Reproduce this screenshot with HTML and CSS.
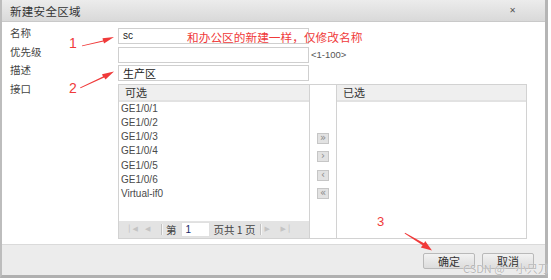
FILE: index.html
```html
<!DOCTYPE html>
<html lang="zh">
<head>
<meta charset="utf-8">
<link rel="stylesheet" href="styles.css">
</head>
<body>
<div class="dialog">
  <div class="hd">
    <span class="title">新建安全区域</span>
    <span class="close">&#x2715;</span>
  </div>
  <div class="bd">
    <div class="form">
      <div class="lbl">名称</div>
      <div class="field"><div class="input">sc</div></div>
      <div class="lbl">优先级</div>
      <div class="field"><div class="input"></div><span class="hint">&lt;1-100&gt;</span></div>
      <div class="lbl">描述</div>
      <div class="field"><div class="input cn">生产区</div></div>
      <div class="lbl">接口</div>
      <div class="transfer">
        <div class="panel left">
          <div class="phd">可选</div>
          <ul class="list">
            <li>GE1/0/1</li>
            <li>GE1/0/2</li>
            <li>GE1/0/3</li>
            <li>GE1/0/4</li>
            <li>GE1/0/5</li>
            <li>GE1/0/6</li>
            <li>Virtual-if0</li>
          </ul>
          <div class="pager">
            <span class="pi">&#x258F;&#x25C0;</span>
            <span class="pi">&#x25C0;</span>
            <span class="sep"></span>
            <span class="pt">第</span>
            <span class="pinput">1</span>
            <span class="pt">页共 1 页</span>
            <span class="sep"></span>
            <span class="pi">&#x25B6;</span>
            <span class="pi">&#x25B6;&#x2595;</span>
          </div>
        </div>
        <div class="mid">
          <span class="mb">&#xBB;</span>
          <span class="mb">&#x203A;</span>
          <span class="mb">&#x2039;</span>
          <span class="mb">&#xAB;</span>
        </div>
        <div class="panel right">
          <div class="phd">已选</div>
        </div>
      </div>
    </div>
  </div>
  <div class="ft">
    <span class="btn">确定</span>
    <span class="btn">取消</span>
  </div>
</div>

<div class="note n1">1</div>
<div class="note n2">2</div>
<div class="note n3">3</div>
<div class="note ntext">和办公区的新建一样，仅修改名称</div>
<svg class="arrows" width="551" height="280" viewBox="0 0 551 280">
  <g fill="#f03a3a">
    <polygon points="82,45.5 103,40.6 102.5,38.2 114,37 104,43.5 103.5,41.6 82,46.3"/>
    <polygon points="80,87.5 103,76.5 102,74.2 114,71.5 105.5,79.5 104.2,77.5 80.5,88.2"/>
    <polygon points="405,232.8 424,243.2 425.2,241 432,250.5 420.8,247.6 422.6,245.3 404.6,233.5"/>
  </g>
</svg>
<div class="wm">CSDN @一小只刀</div>
</body>
</html>
```

FILE: styles.css
```css
html, body {
  margin: 0;
  padding: 0;
  background: #ffffff;
}
body {
  width: 551px;
  height: 280px;
  overflow: hidden;
  position: relative;
  font-family: "Noto Sans CJK SC", "Liberation Sans", sans-serif;
  font-size: 11px;
  color: #333;
}
.dialog {
  width: 543px;
  height: 275px;
  border-left: 2px solid #bdbdbd;
  border-right: 3px solid #b5b5b5;
  border-bottom: 3px solid #b0b0b0;
  display: flex;
  flex-direction: column;
  background: #fff;
}
.hd {
  height: 21px;
  flex: none;
  background: linear-gradient(#ececec, #d9d9d9);
  border-bottom: 1px solid #c9c9c9;
  display: flex;
  align-items: center;
  justify-content: space-between;
  padding: 0 29px 0 8px;
}
.title {
  font-size: 11.5px;
  color: #333;
  letter-spacing: 0.3px;
}
.close {
  font-size: 8px;
  color: #555;
  font-weight: bold;
  font-family: "DejaVu Sans", sans-serif;
}
.bd {
  height: 222px;
  flex: none;
  padding: 6px 0 0 8px;
  box-sizing: border-box;
}
.form {
  display: grid;
  grid-template-columns: 108px 409px;
  row-gap: 2.5px;
}
.lbl {
  font-size: 10.5px;
  color: #444;
  line-height: 9px;
}
.field {
  display: flex;
  align-items: center;
  height: 16px;
}
.input {
  width: 191px;
  height: 16px;
  box-sizing: border-box;
  border: 1px solid #cfcfcf;
  font-family: "Liberation Sans", "Noto Sans CJK SC", sans-serif;
  font-size: 10px;
  line-height: 14px;
  padding-left: 4px;
  color: #222;
}
.input.cn {
  font-family: "Noto Sans CJK SC", sans-serif;
  font-size: 11px;
}
.hint {
  margin-left: 2px;
  font-family: "Liberation Sans", sans-serif;
  font-size: 9.5px;
  color: #555;
}
.transfer {
  display: flex;
  height: 155px;
}
.panel {
  border: 1px solid #d2d2d2;
  box-sizing: border-box;
  display: flex;
  flex-direction: column;
}
.panel.left { width: 192px; }
.panel.right { width: 191px; }
.phd {
  height: 17px;
  flex: none;
  box-sizing: border-box;
  background: #efefef;
  border-bottom: 2px solid #e2e2e2;
  padding-left: 6px;
  line-height: 15px;
  font-size: 11px;
  color: #333;
}
.list {
  list-style: none;
  margin: 0;
  padding: 0 0 0 2px;
  flex: 1;
}
.list li {
  height: 14.3px;
  line-height: 14.3px;
  font-family: "Liberation Sans", sans-serif;
  font-size: 10px;
  color: #4a4a4a;
}
.pager {
  height: 17px;
  flex: none;
  background: #e3e3e3;
  display: flex;
  align-items: center;
  padding-left: 10px;
  gap: 4px;
  color: #444;
}
.pi {
  font-size: 7px;
  color: #c4c4c4;
  font-family: "DejaVu Sans", sans-serif;
  letter-spacing: -2px;
  width: 12px;
}
.sep {
  width: 1px;
  height: 11px;
  background: #c2c2c2;
  box-shadow: 1px 0 0 #f5f5f5;
}
.pt {
  font-size: 10.5px;
  color: #444;
}
.pinput {
  width: 29px;
  height: 15px;
  box-sizing: border-box;
  background: #fff;
  border: 1px solid #e0e0e0;
  font-family: "Liberation Sans", sans-serif;
  font-size: 10px;
  line-height: 13px;
  padding-left: 4px;
  color: #1a2a6a;
}
.mid {
  width: 26px;
  box-sizing: border-box;
  border-top: 1px solid #d2d2d2;
  border-bottom: 1px solid #d2d2d2;
  display: flex;
  flex-direction: column;
  align-items: center;
  padding-top: 48px;
  gap: 7.5px;
}
.mb {
  width: 12px;
  height: 11px;
  box-sizing: border-box;
  background: #e2e2e2;
  border: 1px solid #c6c6c6;
  font-family: "DejaVu Sans", sans-serif;
  font-size: 10px;
  line-height: 8px;
  text-align: center;
  color: #8a8a8a;
}
.ft {
  flex: 1;
  background: #ececec;
  border-top: 1px solid #dadada;
  display: flex;
  justify-content: flex-end;
  align-items: center;
  gap: 7px;
  padding-right: 11px;
  padding-top: 1px;
}
.btn {
  width: 52px;
  height: 16px;
  box-sizing: border-box;
  border: 1px solid #b9b9b9;
  border-radius: 2px;
  background: linear-gradient(#f2f2f2, #dcdcdc);
  text-align: center;
  line-height: 14px;
  font-size: 11px;
  color: #333;
}
.note {
  position: absolute;
  color: #f03a3a;
  font-family: "Liberation Sans", sans-serif;
  font-size: 14px;
  line-height: 14px;
}
.n1 { left: 69px; top: 36px; }
.n2 { left: 69px; top: 81px; }
.n3 { left: 377px; top: 215px; font-size: 13px; }
.ntext {
  left: 187px;
  top: 30px;
  font-family: "Noto Sans CJK SC", sans-serif;
  font-size: 11.7px;
  line-height: 14px;
}
.arrows {
  position: absolute;
  left: 0;
  top: 0;
  pointer-events: none;
}
.wm {
  position: absolute;
  left: 463px;
  top: 261px;
  font-size: 11px;
  line-height: 14px;
  color: rgba(170, 170, 170, 0.85);
  font-family: "Noto Sans CJK SC", sans-serif;
  text-shadow: 0 0 1px #fff;
}
```
